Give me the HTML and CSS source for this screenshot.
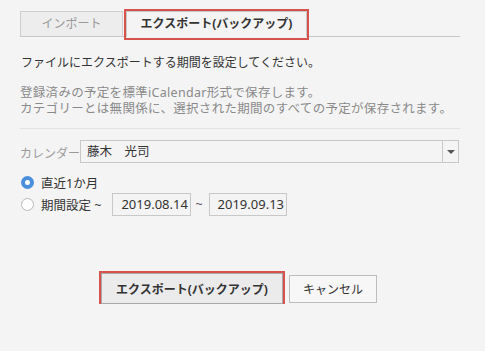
FILE: index.html
```html
<!DOCTYPE html>
<html lang="ja">

<head>
    <meta charset="UTF-8">
    <title>エクスポート</title>
    <link rel="stylesheet" href="styles.css">
</head>

<body>
    <div class="page">
        <!-- Tabs -->
        <div class="tabs">
            <div class="tab">インポート</div>
            <div class="tab active">エクスポート(バックアップ)</div>
        </div>

        <p class="lead">ファイルにエクスポートする期間を設定してください。</p>
        <p class="note">登録済みの予定を標準iCalendar形式で保存します。<br>カテゴリーとは無関係に、選択された期間のすべての予定が保存されます。</p>

        <div class="divider"></div>

        <!-- Calendar select -->
        <div class="calRow">
            <span class="calLabel">カレンダー</span>
            <div class="select">
                <span class="selectText">藤木　光司</span>
                <span class="selectArrow"></span>
            </div>
        </div>

        <!-- Period -->
        <div class="radioRow">
            <span class="radio checked"></span>
            <span>直近1か月</span>
        </div>
        <div class="radioRow period">
            <span class="radio"></span>
            <span>期間設定 ~</span>
            <span class="dateBox">2019.08.14</span>
            <span class="tilde">~</span>
            <span class="dateBox">2019.09.13</span>
        </div>

        <!-- Buttons -->
        <div class="buttons">
            <button class="btn primary">エクスポート(バックアップ)</button>
            <button class="btn">キャンセル</button>
        </div>
    </div>
</body>

</html>
```

FILE: styles.css
```css
body {
    margin: 0;
    padding: 0;
    background-color: #f4f4f4;
    font-family: "Noto Sans", "Noto Sans CJK JP", sans-serif;
    color: #333;
    font-size: 12px;
}

.page {
    width: 440px;
    padding: 11px 0 0 20px;
}

/* Tabs */
.tabs {
    display: flex;
    align-items: flex-end;
    height: 25px;
    border-bottom: 1px solid #c8c8c8;
}

.tab {
    box-sizing: border-box;
    height: 25px;
    line-height: 23px;
    text-align: center;
    border: 1px solid #cfcfcf;
    border-bottom: none;
    font-size: 12px;
}

.tab:first-child {
    width: 103px;
    margin-right: 3px;
    background-color: #ededed;
    color: #9a9a9a;
}

.tab.active {
    position: relative;
    width: 181px;
    height: 26px;
    margin-bottom: -1px;
    background-color: #f4f4f4;
    border-color: #c8c8c8;
    font-weight: bold;
    color: #333;
}

.tab.active::after {
    content: "";
    position: absolute;
    top: -3px;
    left: -3px;
    right: -3px;
    bottom: -3px;
    border: 2px solid #d6524a;
}

/* Description */
.lead {
    margin: 18px 0 0 1px;
    line-height: 16px;
    font-size: 12px;
    color: #333;
}

.note {
    margin: 14px 0 0;
    line-height: 16px;
    font-size: 12.5px;
    letter-spacing: 0.3px;
    color: #8a8a8a;
}

.divider {
    height: 1px;
    margin-top: 11px;
    background-color: #e2e2e2;
}

/* Calendar select */
.calRow {
    display: flex;
    align-items: center;
    margin-top: 11px;
    margin-right: 1px;
}

.calLabel {
    width: 60px;
    color: #9a9a9a;
    font-size: 12px;
    line-height: 16px;
    margin-top: 4px;
}

.select {
    flex: 1;
    display: flex;
    box-sizing: border-box;
    height: 23px;
    border: 1px solid #c8c8c8;
    background-color: #f4f4f4;
}

.selectText {
    flex: 1;
    padding-left: 6px;
    line-height: 21px;
    font-size: 12.5px;
    color: #333;
}

.selectArrow {
    width: 15px;
    border-left: 1px solid #c8c8c8;
    display: flex;
    align-items: center;
    justify-content: center;
}

.selectArrow::before {
    content: "";
    border-left: 4px solid transparent;
    border-right: 4px solid transparent;
    border-top: 4px solid #555;
}

/* Radio rows */
.radioRow {
    display: flex;
    align-items: center;
    height: 20px;
    margin-top: 9px;
    margin-left: 1px;
    font-size: 12.5px;
}

.radioRow.period {
    height: 23px;
    margin-top: 1px;
}

.radio {
    box-sizing: border-box;
    width: 13px;
    height: 13px;
    margin-right: 7px;
    border-radius: 50%;
    border: 1px solid #b8b8b8;
    background-color: #fff;
}

.radio.checked {
    border: 4.5px solid #4a8fdc;
    background-color: #fff;
}

.dateBox {
    box-sizing: border-box;
    width: 79px;
    height: 23px;
    margin-left: 11px;
    padding-left: 8px;
    line-height: 21px;
    border: 1px solid #c8c8c8;
    background-color: #f4f4f4;
    font-size: 13px;
    color: #333;
}

.tilde {
    margin-left: 4px;
    color: #555;
}

.tilde + .dateBox {
    margin-left: 6px;
    width: 78px;
}

/* Buttons */
.buttons {
    display: flex;
    align-items: center;
    margin-top: 57px;
    padding-left: 81px;
}

.btn {
    box-sizing: border-box;
    height: 28px;
    border: 1px solid #bdbdbd;
    background-color: #f7f7f7;
    font-family: inherit;
    font-size: 12px;
    color: #333;
    padding: 0;
}

.btn.primary {
    position: relative;
    width: 182px;
    height: 31px;
    margin-right: 6px;
    background-color: #ebebeb;
    border-color: #a8a8a8;
    font-weight: bold;
}

.btn.primary::after {
    content: "";
    position: absolute;
    top: -3px;
    left: -3px;
    right: -3px;
    bottom: -3px;
    border: 2px solid #d6524a;
}

.btn:last-child {
    width: 88px;
}
```
